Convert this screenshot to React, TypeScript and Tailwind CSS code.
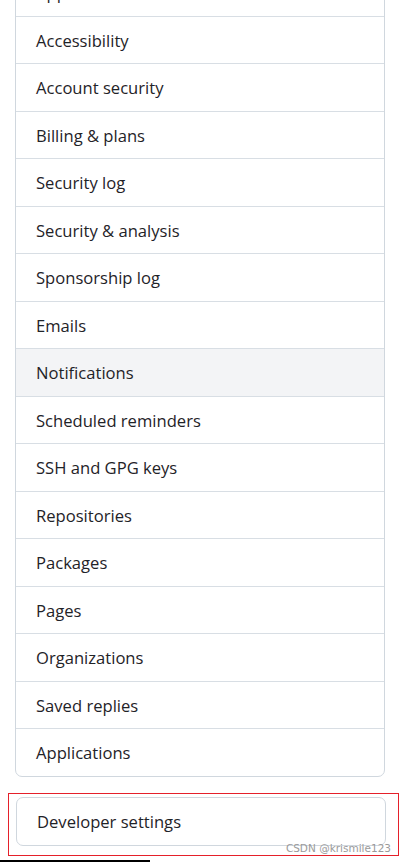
const items = [
  "Appearance",
  "Accessibility",
  "Account security",
  "Billing & plans",
  "Security log",
  "Security & analysis",
  "Sponsorship log",
  "Emails",
  "Notifications",
  "Scheduled reminders",
  "SSH and GPG keys",
  "Repositories",
  "Packages",
  "Pages",
  "Organizations",
  "Saved replies",
  "Applications",
];

export default function App() {
  return (
    <div
      className="relative h-[862px] w-[407px] overflow-hidden bg-white text-[#1f2328]"
      style={{ fontFamily: '"Open Sans", "Noto Sans", sans-serif' }}
    >
      <div className="-mt-[33px] px-[15px]">
        <div className="w-[370px] overflow-hidden rounded-b-[7px] border border-[#d0d7de]">
          {items.map((item, i) => (
            <div
              key={item}
              className={
                "flex h-[47.5px] items-center px-[20px] pt-[3px] text-[16.6px] " +
                (i > 0 ? "border-t border-[#d8dee4] " : "") +
                (item === "Notifications" ? "bg-[#f3f4f6]" : "")
              }
            >
              {item}
            </div>
          ))}
        </div>

        <div className="mt-[16px] -mx-[7px] border border-[#e5202a] px-[7px] pt-[3px] pb-[9px]">
          <div className="flex h-[49px] w-[370px] items-center rounded-[7px] border border-[#d0d7de] px-[20px] pt-[2px] text-[16.6px]">
            Developer settings
          </div>
        </div>
      </div>

      <div
        className="absolute right-[16px] top-[841px] text-[10.5px] text-[#9a9a9a]"
        style={{ fontFamily: '"DejaVu Sans", sans-serif' }}
      >
        CSDN @krismile123
      </div>
      <div className="absolute bottom-0 left-0 h-[2px] w-[150px] bg-black" />
    </div>
  );
}
